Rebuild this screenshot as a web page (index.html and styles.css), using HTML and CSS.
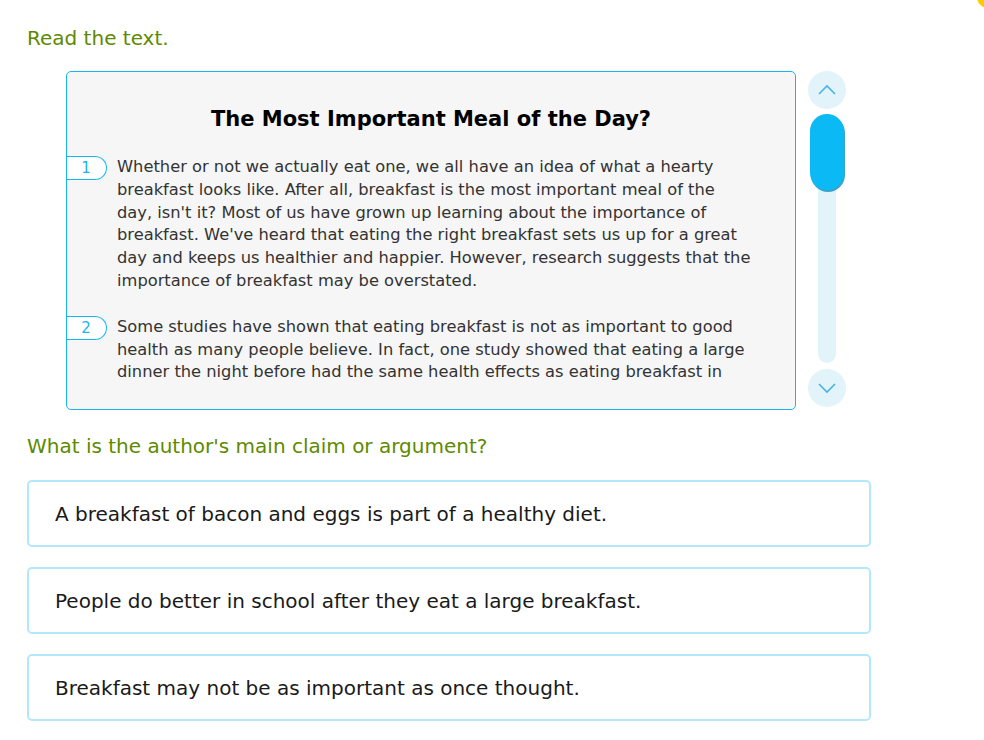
FILE: index.html
```html
<!DOCTYPE html>
<html lang="en">
<head>
<meta charset="utf-8">
<title>Read the text</title>
<link rel="stylesheet" href="styles.css">
</head>
<body>
<div class="corner-dot"></div>
<main class="page">
  <p class="prompt">Read the text.</p>
  <div class="reader">
    <article class="passage">
      <h1 class="title">The Most Important Meal of the Day?</h1>
      <div class="para">
        <span class="num">1</span>
        <p>Whether or not we actually eat one, we all have an idea of what a hearty breakfast looks like. After all, breakfast is the most important meal of the day, isn't it? Most of us have grown up learning about the importance of breakfast. We've heard that eating the right breakfast sets us up for a great day and keeps us healthier and happier. However, research suggests that the importance of breakfast may be overstated.</p>
      </div>
      <div class="para">
        <span class="num">2</span>
        <p>Some studies have shown that eating breakfast is not as important to good health as many people believe. In fact, one study showed that eating a large dinner the night before had the same health effects as eating breakfast in</p>
      </div>
    </article>
    <div class="scroller">
      <button class="sbtn" aria-label="Scroll up">
        <svg width="20" height="12" viewBox="0 0 20 12"><path d="M2 10 L10 2 L18 10" fill="none" stroke="#45b4e6" stroke-width="1.6"/></svg>
      </button>
      <div class="track"><div class="thumb"></div></div>
      <button class="sbtn" aria-label="Scroll down">
        <svg width="20" height="12" viewBox="0 0 20 12"><path d="M2 2 L10 10 L18 2" fill="none" stroke="#45b4e6" stroke-width="1.6"/></svg>
      </button>
    </div>
  </div>
  <p class="question">What is the author's main claim or argument?</p>
  <div class="options">
    <div class="option">A breakfast of bacon and eggs is part of a healthy diet.</div>
    <div class="option">People do better in school after they eat a large breakfast.</div>
    <div class="option">Breakfast may not be as important as once thought.</div>
  </div>
</main>
</body>
</html>
```

FILE: styles.css
```css
html, body {
  margin: 0;
  padding: 0;
  background: #ffffff;
  font-family: "DejaVu Sans", Verdana, sans-serif;
  color: #222222;
}

.corner-dot {
  position: absolute;
  top: -14px;
  left: 977px;
  width: 22px;
  height: 22px;
  border-radius: 50%;
  background: #ffcc00;
}

.page {
  padding: 24px 0 0 27px;
  width: 844px;
}

.prompt, .question {
  margin: 0;
  color: #5e8a00;
  font-size: 20px;
  line-height: 28px;
}

.reader {
  display: flex;
  align-items: flex-start;
  gap: 12px;
  margin: 19px 0 0 39px;
}

.passage {
  width: 730px;
  height: 339px;
  box-sizing: border-box;
  border: 1px solid #1ab5f0;
  border-radius: 5px;
  background: #f6f6f6;
  padding: 0 44px 0 50px;
  overflow: hidden;
}

.title {
  margin: 32px -44px 22px -50px;
  text-align: center;
  font-size: 21px;
  font-weight: bold;
  color: #000000;
  line-height: 30px;
}

.para {
  position: relative;
  margin-bottom: 23px;
}

.para p {
  margin: 0;
  font-size: 16.3px;
  line-height: 22.8px;
  color: #333333;
}

.num {
  position: absolute;
  left: -51px;
  top: 0;
  width: 41px;
  height: 24px;
  box-sizing: border-box;
  border: 1px solid #1ab5f0;
  border-left: none;
  border-radius: 0 12px 12px 0;
  background: #ffffff;
  color: #1ab5f0;
  font-size: 15px;
  line-height: 22px;
  text-align: center;
}

.scroller {
  display: flex;
  flex-direction: column;
  align-items: center;
  width: 38px;
}

.sbtn {
  width: 38px;
  height: 38px;
  border: none;
  border-radius: 50%;
  background: #e3f3fa;
  padding: 0;
  display: flex;
  align-items: center;
  justify-content: center;
}

.track {
  width: 18px;
  height: 249px;
  margin: 5px 0 6px;
  background: #e3f3fa;
  border-radius: 9px;
  display: flex;
  justify-content: center;
}

.thumb {
  width: 34px;
  flex: none;
  height: 76px;
  border-radius: 17px;
  background: #0bbaf5;
  box-shadow: 1px 2px 0 #3aa3cc;
}

.question {
  margin-top: 22px;
}

.options {
  display: flex;
  flex-direction: column;
  gap: 20px;
  margin-top: 20px;
}

.option {
  height: 67px;
  box-sizing: border-box;
  border: 2px solid #b3e8fa;
  border-radius: 5px;
  padding: 0 26px;
  display: flex;
  align-items: center;
  font-size: 20px;
  color: #1a1a1a;
}
```
